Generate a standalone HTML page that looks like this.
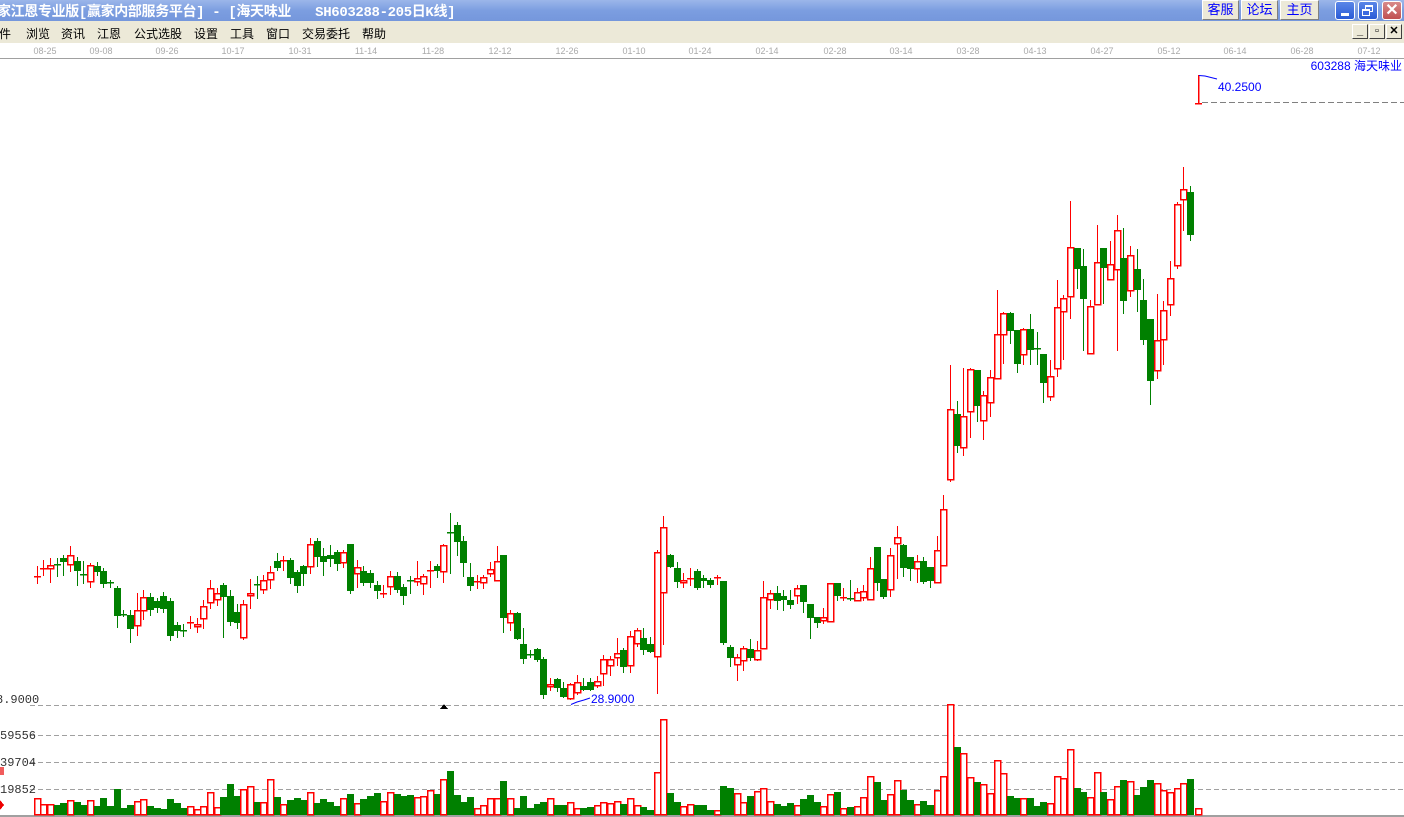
<!DOCTYPE html>
<html><head><meta charset="utf-8"><style>
*{margin:0;padding:0;box-sizing:border-box}
body{width:1404px;height:817px;overflow:hidden;background:#fff;font-family:"Liberation Sans","Noto Sans CJK SC",sans-serif;position:relative}
#title{position:absolute;left:0;top:0;width:1404px;height:21px;background:linear-gradient(180deg,#9bb6ea 0%,#7c9ee0 50%,#7597dc 100%);}
#title .t{position:absolute;left:-3px;top:1px;color:#fff;font-size:14px;font-family:"Liberation Mono","Noto Sans CJK SC",monospace;white-space:pre;letter-spacing:-0.35px;font-weight:bold}
.btn{position:absolute;top:0;height:20px;background:#ece9d8;border:1px solid #fff;border-right-color:#808080;border-bottom-color:#808080;color:#00f;font-size:13px;text-align:center;line-height:18px}
.wb{position:absolute;top:1px;width:20px;height:19px;border-radius:3px;border:1px solid #fff;background:linear-gradient(#5a86e8,#2a5bd6)}
#menu{position:absolute;left:0;top:21px;width:1404px;height:22px;background:#ece9d8}
#menu span{position:absolute;top:4px;font-size:12px;color:#000}
.mb{position:absolute;top:24px;width:16px;height:15px;background:#ece9d8;border:1px solid #fff;border-right-color:#404040;border-bottom-color:#404040;font-size:11px;text-align:center;line-height:12px;font-weight:bold}
#dates{position:absolute;left:0;top:43px;width:1404px;height:16px;background:#fff;border-bottom:1px solid #a0a0a0}
#dates span{position:absolute;top:3px;font-size:9px;color:#aaa;transform:translateX(-50%)}
svg{position:absolute;left:0;top:0}
</style></head><body>
<div id="title"><span class="t">家江恩专业版[赢家内部服务平台] - [海天味业   SH603288-205日K线]</span></div>
<div class="btn" style="left:1202px;width:37px">客服</div>
<div class="btn" style="left:1241px;width:37px">论坛</div>
<div class="btn" style="left:1280px;width:39px">主页</div>
<div class="wb" style="left:1335px"><div style="position:absolute;left:5px;top:11px;width:8px;height:3px;background:#fff"></div></div>
<div class="wb" style="left:1358px"><div style="position:absolute;left:6px;top:3px;width:8px;height:7px;border:1px solid #fff;border-top-width:2px"></div><div style="position:absolute;left:3px;top:7px;width:8px;height:7px;border:1px solid #fff;border-top-width:2px;background:#3c6ae0"></div></div>
<div class="wb" style="left:1382px;background:linear-gradient(#d88a8a,#c05050);color:#fff;font-size:16px;text-align:center;line-height:17px;font-weight:bold">✕</div>
<div id="menu">
<span style="left:-1px">件</span><span style="left:26px">浏览</span><span style="left:61px">资讯</span><span style="left:97px">江恩</span><span style="left:134px">公式选股</span><span style="left:194px">设置</span><span style="left:230px">工具</span><span style="left:266px">窗口</span><span style="left:302px">交易委托</span><span style="left:362px">帮助</span>
</div>
<div class="mb" style="left:1352px">_</div><div class="mb" style="left:1369px">▫</div><div class="mb" style="left:1386px">✕</div>
<div id="dates">
<span style="left:45px">08-25</span><span style="left:101px">09-08</span><span style="left:167px">09-26</span><span style="left:233px">10-17</span><span style="left:300px">10-31</span><span style="left:366px">11-14</span><span style="left:433px">11-28</span><span style="left:500px">12-12</span><span style="left:567px">12-26</span><span style="left:634px">01-10</span><span style="left:700px">01-24</span><span style="left:767px">02-14</span><span style="left:835px">02-28</span><span style="left:901px">03-14</span><span style="left:968px">03-28</span><span style="left:1035px">04-13</span><span style="left:1102px">04-27</span><span style="left:1169px">05-12</span><span style="left:1235px">06-14</span><span style="left:1302px">06-28</span><span style="left:1369px">07-12</span>
</div>
<svg id="c" width="1404" height="817" shape-rendering="crispEdges" style="top:0"></svg>
<script>
var D=[[576,576,'r',566,583],[568,568,'r',560,575],[565,568,'r',558,582],[564,564,'g',558,576],[558,561,'g',555,575],[555,564,'r',546,571],[561,570,'g',557,585],[574,574,'g',561,583],[565,581,'r',563,587],[566,571,'g',562,575],
[571,583,'g',568,587],[582,582,'g',580,587],[588,615,'g',586,627],[614,614,'g',610,616],[615,628,'g',610,642],[610,625,'r',593,635],[597,610,'r',590,619],[597,609,'g',593,615],[601,607,'g',598,612],[596,608,'g',592,612],
[601,635,'g',598,640],[625,630,'g',622,637],[630,630,'g',624,636],[622,622,'r',616,628],[624,626,'r',618,632],[606,618,'r',600,628],[588,602,'r',580,608],[593,599,'r',588,605],[585,596,'g',583,637],[596,621,'g',590,625],
[612,622,'g',604,628],[604,637,'r',600,639],[593,595,'r',579,608],[584,584,'g',576,598],[580,589,'r',575,593],[572,579,'r',566,588],[561,567,'g',553,570],[560,560,'r',556,570],[560,577,'g',558,583],[572,585,'g',570,592],
[566,573,'g',565,585],[544,566,'r',538,573],[541,556,'g',538,566],[556,561,'g',548,575],[555,558,'g',545,566],[552,563,'g',550,570],[552,562,'r',550,567],[544,590,'g',544,593],[567,573,'r',560,587],[571,582,'g',566,585],
[573,582,'g',570,587],[585,590,'g',581,598],[593,593,'r',585,597],[576,586,'r',571,594],[576,589,'g',572,592],[587,595,'g',584,604],[580,580,'g',576,593],[578,581,'r',561,585],[576,583,'r',574,594],[570,570,'r',561,587],
[566,570,'g',564,577],[545,571,'r',544,582],[532,532,'g',513,573],[525,541,'g',522,555],[541,562,'g',536,576],[577,585,'g',563,590],[581,581,'r',575,588],[577,582,'r',575,588],[569,573,'r',562,576],[561,580,'r',546,580],
[555,617,'g',555,632],[613,622,'r',610,630],[613,638,'g',612,639],[644,658,'g',628,663],[654,654,'g',650,657],[649,659,'g',648,661],[659,694,'g',657,698],[684,686,'r',678,690],[679,687,'g',678,691],[688,696,'g',682,697],
[684,698,'r',683,699],[682,692,'r',675,694],[686,689,'g',678,690],[682,689,'g',678,690],[681,685,'r',676,687],[659,673,'r',655,685],[659,665,'r',656,675],[653,657,'r',638,665],[650,666,'g',648,672],[636,665,'r',631,672],
[630,643,'r',628,646],[638,649,'g',628,654],[644,651,'g',637,652],[552,656,'r',550,693],[527,592,'r',516,644],[555,566,'g',554,567],[568,581,'g',562,587],[580,582,'r',573,587],[578,578,'r',568,585],[571,587,'g',569,589],
[578,580,'g',575,587],[580,584,'g',578,587],[577,577,'r',575,584],[581,642,'g',581,644],[647,657,'g',645,666],[657,664,'r',654,680],[648,660,'r',646,670],[649,657,'g',639,660],[650,659,'r',641,660],[597,648,'r',581,648],
[593,599,'r',590,608],[593,600,'g',586,609],[596,599,'g',590,610],[600,604,'g',590,608],[588,595,'r',585,603],[585,601,'g',585,612],[604,617,'g',604,638],[617,622,'g',617,627],[617,620,'r',608,623],[583,621,'r',583,621],
[583,595,'g',583,600],[597,597,'r',588,600],[598,598,'g',580,600],[592,600,'r',588,600],[591,597,'r',585,600],[568,599,'r',557,599],[547,582,'g',547,590],[579,596,'g',579,598],[555,589,'r',548,596],[537,543,'r',526,578],
[545,567,'g',544,576],[557,568,'g',557,580],[561,568,'r',555,582],[561,581,'g',557,583],[567,580,'g',567,587],[550,582,'r',536,582],[509,565,'r',495,565],[409,479,'r',365,481],[414,445,'g',401,452],[416,447,'r',368,455],
[369,411,'r',368,437],[370,405,'g',370,421],[395,420,'r',391,439],[377,402,'r',370,416],[334,378,'r',290,378],[313,334,'r',312,363],[313,330,'g',312,343],[330,363,'g',330,372],[329,354,'r',328,364],[329,349,'g',314,364],
[348,348,'g',332,364],[354,382,'g',354,402],[376,396,'r',360,400],[307,368,'r',280,376],[298,311,'r',295,359],[247,296,'r',201,318],[248,268,'g',248,288],[266,298,'g',249,350],[306,353,'r',300,353],[262,304,'r',225,304],
[248,267,'g',248,303],[264,279,'r',241,279],[230,269,'r',215,350],[258,300,'g',228,313],[255,290,'r',246,296],[269,289,'g',249,311],[300,339,'g',279,344],[319,380,'g',319,404],[340,370,'r',294,378],[310,339,'r',301,364],
[278,304,'r',261,315],[204,265,'r',202,268],[189,199,'r',167,230],[192,234,'g',186,240]];
var V=[17,11,11,10,12,15,13,10,15,9,17,9,26,7,10,14,16,9,7,6,16,12,7,9,6,9,23,8,18,31,19,26,29,13,13,36,18,11,15,17,
15,23,12,16,13,9,17,21,12,16,19,22,14,23,21,19,20,18,19,25,21,36,44,20,13,18,7,10,17,17,34,17,7,19,7,11,13,17,10,10,13,7,7,8,10,13,12,14,11,17,10,8,5,43,96,22,13,9,11,10,
10,5,5,29,27,22,13,19,24,27,14,11,9,12,10,16,20,13,9,21,23,7,8,9,18,39,33,15,21,35,25,15,11,14,10,25,39,111,68,62,38,33,31,22,55,42,19,17,17,17,9,13,12,39,37,66,27,23,18,43,23,16,29,35,34,20,28,35,32,25,23,27,32,36];
var R='#ff0000',G='#008000',s='';
function dash(y){return '<line x1="30" y1="'+(y+.5)+'" x2="1404" y2="'+(y+.5)+'" stroke="#a0a0a0" stroke-dasharray="5,3"/>';}
s+=dash(705)+dash(735)+dash(762)+dash(789);
s+='<line x1="1202" y1="102.5" x2="1404" y2="102.5" stroke="#808080" stroke-dasharray="6,3"/>';
s+='<rect x="0" y="815" width="1404" height="2" fill="#a0a0a0"/>';
for(var i=0;i<D.length;i++){var d=D[i],cx=Math.round(36.7+6.667*i),col=d[2]=='r'?R:G;
 var x=cx+0.5;
 s+='<line x1="'+x+'" y1="'+d[3]+'" x2="'+x+'" y2="'+d[0]+'" stroke="'+col+'"/>';
 s+='<line x1="'+x+'" y1="'+d[1]+'" x2="'+x+'" y2="'+(d[4]+1)+'" stroke="'+col+'"/>';
 if(d[0]==d[1]) s+='<rect x="'+(cx-3)+'" y="'+d[0]+'" width="7" height="1.5" fill="'+col+'"/>';
 else if(d[2]=='r') s+='<rect x="'+(cx-2.5)+'" y="'+(d[0]+.5)+'" width="6" height="'+(d[1]-d[0])+'" fill="#fff" stroke="'+R+'" stroke-width="1.5"/>';
 else s+='<rect x="'+(cx-3)+'" y="'+d[0]+'" width="7" height="'+(d[1]-d[0]+1)+'" fill="'+G+'"/>';
 var h=V[i];
 if(d[2]=='r') s+='<rect x="'+(cx-2.5)+'" y="'+(815-h+.5)+'" width="6" height="'+(h-1)+'" fill="#fff" stroke="'+R+'" stroke-width="1.5"/>';
 else s+='<rect x="'+(cx-3)+'" y="'+(815-h)+'" width="7" height="'+h+'" fill="'+G+'"/>';
}
s+='<rect x="1195.5" y="808.5" width="6" height="6" fill="#fff" stroke="'+R+'" stroke-width="1.5"/>';
s+='<line x1="1198.5" y1="75" x2="1198.5" y2="104" stroke="'+R+'" stroke-width="1.5"/><line x1="1195" y1="103.5" x2="1202" y2="103.5" stroke="'+R+'" stroke-width="1.5"/>';
s+='<polyline points="1199,75.5 1205,76 1217,79" fill="none" stroke="#0000ff" shape-rendering="auto"/>';
s+='<text x="1218" y="91" font-size="12" fill="#0000ff" font-family="Liberation Sans">40.2500</text>';
s+='<polyline points="571,704.5 577,702 584,700 590,698" fill="none" stroke="#0000ff" shape-rendering="auto"/>';
s+='<text x="591" y="703" font-size="12" fill="#0000ff" font-family="Liberation Sans">28.9000</text>';
s+='<polygon points="440,709 444,704 448,709" fill="#000"/>';
s+='<text x="1402" y="70" font-size="12" fill="#0000ff" text-anchor="end" font-family="Liberation Sans,Noto Sans CJK SC,sans-serif">603288 海天味业</text>';
s+='<g font-size="12" fill="#333" font-family="Liberation Mono,monospace"><text x="-4" y="703">8.9000</text><text x="0" y="739">59556</text><text x="0" y="766">39704</text><text x="0" y="793">19852</text></g>';
s+='<rect x="-3" y="767" width="7" height="8" fill="#e33" opacity=".8"/><polygon points="0,800 4,805 0,810 -4,805" fill="#e00"/>';
document.getElementById('c').innerHTML=s;
</script>
</body></html>
